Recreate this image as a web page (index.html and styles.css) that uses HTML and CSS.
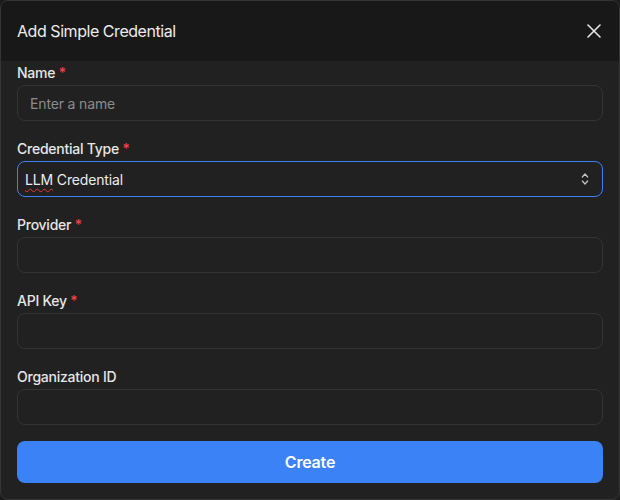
FILE: index.html
```html
<!DOCTYPE html>
<html lang="en">
<head>
<meta charset="utf-8">
<title>Add Simple Credential</title>
<link rel="stylesheet" href="styles.css">
</head>
<body>
<div class="dialog">
  <div class="dialog-header">
    <h2 class="dialog-title">Add Simple Credential</h2>
    <button class="close-btn" aria-label="Close">
      <svg width="24" height="24" viewBox="0 0 24 24" fill="none" stroke="currentColor" stroke-width="1.6" stroke-linecap="round" stroke-linejoin="round"><path d="M18 6 6 18"/><path d="m6 6 12 12"/></svg>
    </button>
  </div>
  <div class="dialog-body">
    <div class="fields">
      <div class="field">
        <label class="label">Name <span class="req">*</span></label>
        <div class="input"><span class="placeholder">Enter a name</span></div>
      </div>
      <div class="field">
        <label class="label">Credential Type <span class="req">*</span></label>
        <div class="input select"><span class="value"><span class="spell">LLM</span> Credential</span>
          <svg class="chev" width="16" height="16" viewBox="0 0 24 24" fill="none" stroke="currentColor" stroke-width="1.8" stroke-linecap="round" stroke-linejoin="round"><path d="m8 15 4 4.5 4-4.5"/><path d="m8 9 4-4.5 4 4.5"/></svg>
        </div>
      </div>
      <div class="field">
        <label class="label">Provider <span class="req">*</span></label>
        <div class="input"></div>
      </div>
      <div class="field">
        <label class="label">API Key <span class="req">*</span></label>
        <div class="input"></div>
      </div>
      <div class="field">
        <label class="label">Organization ID</label>
        <div class="input"></div>
      </div>
    </div>
    <button class="create-btn">Create</button>
  </div>
</div>
</body>
</html>
```
FILE: styles.css
```css
* { box-sizing: border-box; }
html, body { margin: 0; padding: 0; }
body {
  background: #1b1b1b;
  font-family: Inter, "Liberation Sans", sans-serif;
  width: 620px;
  height: 500px;
}
.dialog {
  width: 620px;
  height: 500px;
  border: 1px solid #353535;
  border-radius: 8px;
  background: #212121;
  overflow: hidden;
  display: flex;
  flex-direction: column;
}
.dialog-header {
  height: 60px;
  background: #181818;
  display: flex;
  align-items: center;
  justify-content: space-between;
  padding: 0 16px;
}
.dialog-title {
  margin: 0;
  font-size: 16px;
  font-weight: 400;
  color: #ececec;
  letter-spacing: -0.45px;
}
.close-btn {
  background: none;
  border: none;
  color: #e5e5e5;
  padding: 0;
  width: 24px;
  height: 24px;
  display: flex;
  margin-right: -3px;
}
.dialog-body {
  padding: 2px 16px 0;
}
.fields {
  display: flex;
  flex-direction: column;
  gap: 18px;
}
.field {
  display: flex;
  flex-direction: column;
  gap: 2px;
}
.label {
  font-size: 14px;
  line-height: 20px;
  font-weight: 500;
  color: #e6e6e6;
  letter-spacing: -0.25px;
}
.req { color: #ef4444; }
.input {
  height: 36px;
  border: 1px solid #343434;
  border-radius: 8px;
  background: #212121;
  display: flex;
  align-items: center;
  padding: 0 12px;
  font-size: 14px;
  letter-spacing: -0.15px;
}
.placeholder { color: #8c8c8c; }
.select {
  border-color: #3b82f6;
  justify-content: space-between;
  padding: 0 9px 0 7px;
}
.value { color: #ececec; }
.spell {
  text-decoration: underline wavy #e53935;
  text-decoration-thickness: 1px;
  text-underline-offset: 3px;
}
.chev { color: #c4c4c4; width: 16px; height: 16px; }
.create-btn {
  margin-top: 16px;
  width: 100%;
  height: 42px;
  border: none;
  border-radius: 8px;
  background: #3b82f6;
  color: #ffffff;
  font-family: inherit;
  font-size: 16px;
  font-weight: 600;
  letter-spacing: -0.2px;
}
```
